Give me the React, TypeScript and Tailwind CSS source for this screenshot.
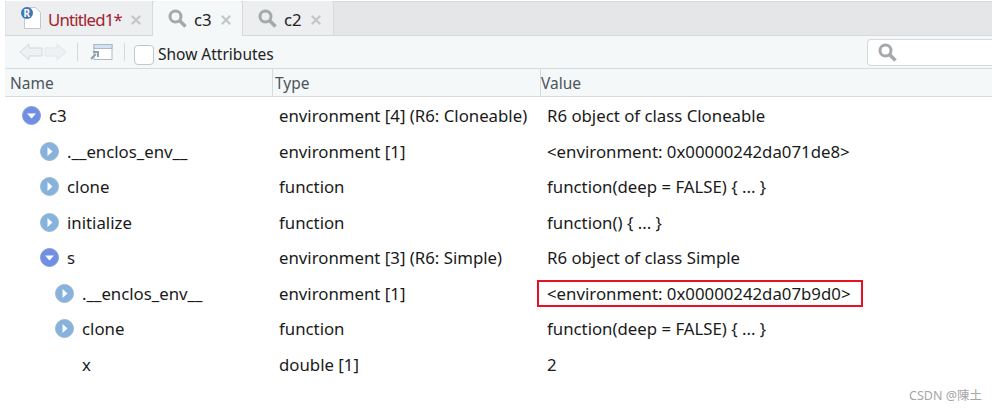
import { X } from 'lucide-react';

const rows = [
  { name: 'c3', indent: 'pl-[17px]', icon: 'open', type: 'environment [4] (R6: Cloneable)', value: 'R6 object of class Cloneable' },
  { name: '.__enclos_env__', indent: 'pl-[35px]', icon: 'closed', type: 'environment [1]', value: '<environment: 0x00000242da071de8>' },
  { name: 'clone', indent: 'pl-[35px]', icon: 'closed', type: 'function', value: 'function(deep = FALSE) { ... }' },
  { name: 'initialize', indent: 'pl-[35px]', icon: 'closed', type: 'function', value: 'function() { ... }' },
  { name: 's', indent: 'pl-[35px]', icon: 'open', type: 'environment [3] (R6: Simple)', value: 'R6 object of class Simple' },
  { name: '.__enclos_env__', indent: 'pl-[50px]', icon: 'closed', type: 'environment [1]', value: '<environment: 0x00000242da07b9d0>', marked: true },
  { name: 'clone', indent: 'pl-[50px]', icon: 'closed', type: 'function', value: 'function(deep = FALSE) { ... }' },
  { name: 'x', indent: 'pl-[50px]', icon: 'none', type: 'double [1]', value: '2' },
];

function Expander({ kind }: { kind: string }) {
  if (kind === 'none') return <span className="w-[19px] h-[19px] shrink-0" />;
  const open = kind === 'open';
  return (
    <svg width="19" height="19" viewBox="0 0 19 19" className="shrink-0">
      <circle cx="9.5" cy="9.5" r="9" fill={open ? '#6f8fe6' : '#86b3de'} stroke={open ? '#8a9cc8' : '#9fb6cc'} />
      {open ? <path d="M5 7.5h9l-4.5 5z" fill="#fff" /> : <path d="M7.5 5v9l5-4.5z" fill="#fff" />}
    </svg>
  );
}

function Magnifier() {
  return (
    <svg width="19" height="19" viewBox="0 0 19 19" className="shrink-0">
      <circle cx="7.5" cy="7.5" r="5.5" fill="none" stroke="#a4a9ab" strokeWidth="3" />
      <path d="M11.5 11.5l6 6" stroke="#a4a9ab" strokeWidth="3.5" />
    </svg>
  );
}

function Tab({ active, label, width }: { active?: boolean; label: string; width: string }) {
  return (
    <div className={`flex items-center gap-[7px] pl-[15px] border-r border-[#d6dadc] rounded-t-[3px] ${width} ${active ? 'bg-[#f4f8f9] -mb-px h-[35px]' : 'bg-[#eceef0] h-[34px]'}`}>
      <Magnifier />
      <span className="mt-[3px] text-[#222]">{label}</span>
      <X size={14} strokeWidth={4} className="mt-[3px] text-[#c3c7ca]" />
    </div>
  );
}

export default function App() {
  return (
    <div className="relative w-[992px] h-[413px] overflow-hidden bg-white pt-px pl-[5px] text-[16.8px] text-[#1a1a1a] font-['Noto_Sans','Open_Sans',sans-serif]">
      {/* Tabs */}
      <div className="flex items-end h-[35px] pl-px bg-[#e5e6e8] border-t border-b border-[#d6dadc]">
        <div className="flex items-center h-[34px] w-[147px] gap-[6px] pl-[14px] bg-[#eceef0] border-r border-[#d6dadc]">
          <div className="relative w-[22px] h-[24px] shrink-0">
            <svg width="22" height="24" viewBox="0 0 22 24">
              <path d="M4.5 1.5h11l5 5v16h-16z" fill="#fff" stroke="#c4c8cb" />
              <circle cx="7" cy="7" r="6" fill="#3f78b5" />
            </svg>
            <span className="absolute left-[3.5px] top-[1px] text-[10px] leading-[12px] font-bold text-white">R</span>
          </div>
          <span className="mt-[3px] text-[#a3232e] tracking-[-0.8px]">Untitled1*</span>
          <X size={14} strokeWidth={4} className="mt-[3px] ml-[1px] text-[#c3c7ca]" />
        </div>
        <Tab active label="c3" width="w-[90px]" />
        <Tab label="c2" width="w-[91px]" />
      </div>

      {/* Toolbar */}
      <div className="flex items-center h-[33px] bg-[#f4f8f9] border-b border-[#d6dadc]">
        <svg width="48" height="20" viewBox="0 0 48 20" className="ml-[14px] shrink-0">
          <path d="M1 10l9-8v4h13v8H10v4z" fill="#eef1f3" stroke="#d3d7da" />
          <path d="M47 10l-9-8v4H26v8h12v4z" fill="#eef1f3" stroke="#e3e6e8" />
        </svg>
        <div className="w-px h-[18px] bg-[#d6dadc] ml-[10px]" />
        <svg width="24" height="18" viewBox="0 0 24 18" className="ml-[12px] shrink-0">
          <rect x="4" y="1.5" width="18" height="15" fill="#fff" stroke="#aeb9c2" />
          <rect x="4" y="1.5" width="18" height="4" fill="#cfe3f5" stroke="#aeb9c2" />
          <path d="M1 16l5-5M3 9h5v5" fill="none" stroke="#8fa1af" strokeWidth="2" />
        </svg>
        <div className="w-px h-[18px] bg-[#d6dadc] ml-[10px]" />
        <div className="w-[20px] h-[20px] ml-[9px] mt-[6px] bg-white border border-[#c3c7ca] rounded-[4px] shrink-0" />
        <span className="ml-[4px] mt-[5px] text-[#222] text-[15.5px] whitespace-nowrap">Show Attributes</span>
        <div className="flex items-center ml-auto w-[125px] h-[27px] shrink-0 bg-white border border-r-0 border-[#d6dadc] rounded-l-[4px] pl-[10px]">
          <Magnifier />
        </div>
      </div>

      {/* Column headers */}
      <div className="flex h-[28px] items-center bg-[#f4f8f9] border-b border-[#d6dadc] text-[15.5px] text-[#4d5459]">
        <div className="w-[268px] h-full flex items-center pl-[5px] pt-[2px] border-r border-[#d6dadc]">Name</div>
        <div className="w-[268px] h-full flex items-center pl-[2px] pt-[2px] border-r border-[#d6dadc]">Type</div>
        <div className="pt-[2px]">Value</div>
      </div>

      {/* Rows */}
      <div className="pt-[1px]">
        {rows.map((row, i) => (
          <div key={i} className="flex items-center h-[35.5px] whitespace-nowrap">
            <div className={`w-[269px] flex items-center gap-[8px] ${row.indent}`}>
              <Expander kind={row.icon} />
              <span>{row.name}</span>
            </div>
            <div className="w-[268px] pl-[5px]">{row.type}</div>
            <div className="pl-[5px]">
              {row.marked ? (
                <span className="relative">
                  {row.value}
                  <span className="absolute -left-[10px] -right-[12px] -top-[2px] -bottom-[2px] border-2 border-[#e81123]" />
                </span>
              ) : (
                row.value
              )}
            </div>
          </div>
        ))}
      </div>

      <span className="absolute right-[10px] bottom-[7px] text-[12.5px] text-[#a6a6a6] font-['Noto_Sans','Noto_Sans_CJK_SC',sans-serif]">CSDN @陳土</span>
    </div>
  );
}
